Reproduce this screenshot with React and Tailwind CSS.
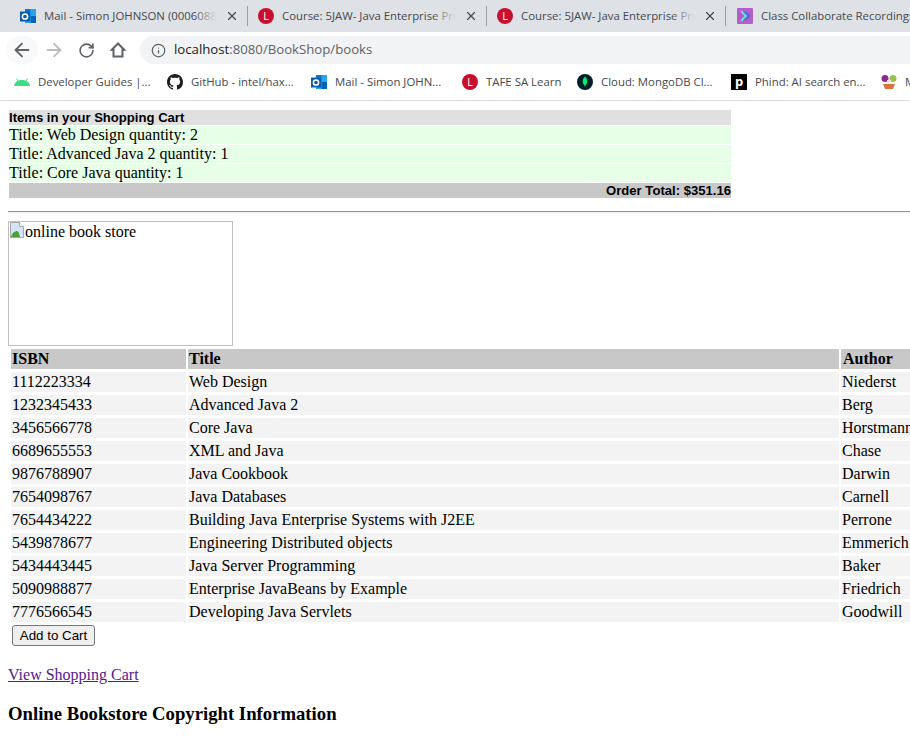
import React from 'react'
import { X, ArrowLeft, ArrowRight, RotateCw, Info } from 'lucide-react'

const books = [
  ['1112223334', 'Web Design', 'Niederst'],
  ['1232345433', 'Advanced Java 2', 'Berg'],
  ['3456566778', 'Core Java', 'Horstmann'],
  ['6689655553', 'XML and Java', 'Chase'],
  ['9876788907', 'Java Cookbook', 'Darwin'],
  ['7654098767', 'Java Databases', 'Carnell'],
  ['7654434222', 'Building Java Enterprise Systems with J2EE', 'Perrone'],
  ['5439878677', 'Engineering Distributed objects', 'Emmerich'],
  ['5434443445', 'Java Server Programming', 'Baker'],
  ['5090988877', 'Enterprise JavaBeans by Example', 'Friedrich'],
  ['7776566545', 'Developing Java Servlets', 'Goodwill'],
]

function Outlook() {
  return (
    <svg width="16" height="16" viewBox="0 0 16 16" className="shrink-0">
      <rect x="5" y="1" width="11" height="14" fill="#28a8ea" />
      <rect x="5" y="1" width="5.5" height="7" fill="#0078d4" />
      <rect x="10.5" y="8" width="5.5" height="7" fill="#0364b8" />
      <rect x="0" y="3.5" width="10" height="10" fill="#0f5cab" />
      <circle cx="5" cy="8.5" r="2.6" fill="none" stroke="#fff" strokeWidth="1.5" />
    </svg>
  )
}

function LearnIcon() {
  return (
    <span className="w-4 h-4 shrink-0 rounded-full bg-[#c8102e] text-white text-[11px] leading-4 text-center font-['Open_Sans',sans-serif]">L</span>
  )
}

function CollabIcon() {
  return (
    <svg width="16" height="16" viewBox="0 0 16 16" className="shrink-0">
      <rect width="16" height="16" rx="1" fill="#b45cc8" />
      <path d="M4 3l5 5-5 5" fill="none" stroke="#5ee0e0" strokeWidth="2" />
      <path d="M8 4l4 4-4 4" fill="none" stroke="#3f6fd8" strokeWidth="2" />
    </svg>
  )
}

function Android() {
  return (
    <svg width="16" height="16" viewBox="0 0 16 16" className="shrink-0">
      <path d="M0 12C.4 8.600 3.600 6 8 6s7.600 2.600 8 6z" fill="#3ddc84" />
      <path d="M4 7L2.500 4.500M12 7l1.500-2.500" stroke="#3ddc84" strokeWidth="1" />
    </svg>
  )
}

function GitHub() {
  return (
    <svg width="16" height="16" viewBox="0 0 16 16" className="shrink-0" fill="#1b1f23">
      <path d="M8 0C3.580 0 0 3.580 0 8c0 3.540 2.290 6.530 5.470 7.590.4.070.55-.17.55-.38 0-.19-.01-.82-.01-1.490-2.010.37-2.530-.49-2.690-.94-.09-.23-.48-.94-.82-1.130-.28-.15-.68-.52-.01-.53.63-.01 1.080.58 1.230.82.72 1.210 1.870.87 2.330.66.070-.52.28-.87.51-1.070-1.780-.2-3.640-.89-3.640-3.950 0-.87.31-1.590.82-2.150-.08-.2-.36-1.020.08-2.120 0 0 .67-.21 2.200.82.64-.18 1.320-.27 2-.27s1.360.09 2 .27c1.530-1.040 2.200-.82 2.200-.82.44 1.100.16 1.920.08 2.120.51.56.82 1.270.82 2.150 0 3.070-1.870 3.750-3.650 3.950.29.25.54.73.54 1.480 0 1.070-.01 1.930-.01 2.200 0 .21.15.46.55.38A8.010 8.010 0 0016 8c0-4.420-3.580-8-8-8z" />
    </svg>
  )
}

function Mongo() {
  return (
    <svg width="16" height="16" viewBox="0 0 16 16" className="shrink-0">
      <circle cx="8" cy="8" r="8" fill="#001e2b" />
      <path d="M8 2.500c1.800 2 2.600 3.700 2.300 5.600C10 10 9 11 8.300 11.800L8 13.500l-.3-1.700C7 11 6 10 5.700 8.100 5.400 6.200 6.200 4.500 8 2.500z" fill="#00ed64" />
    </svg>
  )
}

function Phind() {
  return (
    <span className="w-4 h-4 shrink-0 bg-black text-white text-[13px] leading-[15px] text-center font-bold font-['Open_Sans',sans-serif]">p</span>
  )
}

function Trees() {
  return (
    <svg width="16" height="16" viewBox="0 0 16 16" className="shrink-0">
      <circle cx="4" cy="4.500" r="3.500" fill="#8e2a8e" />
      <circle cx="12" cy="4.500" r="3.500" fill="#9cc04c" />
      <rect x="6" y="6" width="4" height="4" fill="#f3e9dc" />
      <path d="M2 10h12l-2 5H4z" fill="#d2773a" />
    </svg>
  )
}

function HomeIcon() {
  return (
    <svg width="18" height="18" viewBox="0 0 18 18" fill="none" stroke="#5f6368" strokeWidth="2">
      <path d="M9 2.500L2.800 8.800H4.500V15.500H13.500V8.800H15.200Z" strokeLinejoin="miter" />
    </svg>
  )
}

function BrokenImage() {
  return (
    <svg width="16" height="16" viewBox="0 0 16 16" className="shrink-0">
      <path d="M1.500.5h9l4 4v11h-13z" fill="#d6e4f7" stroke="#a8a8a8" />
      <path d="M10.500.5v4h4" fill="#fff" stroke="#a8a8a8" />
      <path d="M2 15c1-4 4-6 6-6 1.500 0 2 2 3 6z" fill="#4f9e3c" />
    </svg>
  )
}

function Tab({ icon, title, w }) {
  return (
    <div className={`${w} h-[20px] flex items-center border-r border-[#9aa0a6] shrink-0 pl-[10px] pr-[8px] gap-[8px]`}>
      {icon}
      <div className="relative -mt-px flex-1 min-w-0 overflow-hidden whitespace-nowrap text-[11.4px] text-[#45494e]">
        {title}
        <div className="absolute right-0 top-0 bottom-0 w-6 bg-gradient-to-l from-[#dee1e6] to-transparent" />
      </div>
      <X size={14} strokeWidth={2} className="text-[#45494e] shrink-0" />
    </div>
  )
}

function Bookmark({ icon, title, w }) {
  return (
    <div className={`${w} flex items-center gap-[8px] shrink-0`}>
      {icon}
      <span className="whitespace-nowrap text-[11.4px] text-[#45494e]">{title}</span>
    </div>
  )
}

function Slot({ children, bg }) {
  return <div className={`w-8 h-7 flex items-center justify-center rounded-full shrink-0 ${bg || ''}`}>{children}</div>
}

export default function App() {
  return (
    <div className="w-[910px] h-[748px] overflow-hidden bg-white font-['Liberation_Serif',serif] text-black text-base">
      <div className="h-8 bg-[#dee1e6] flex items-center pl-[10px] overflow-hidden font-['Open_Sans',sans-serif]">
        <Tab w="w-[238px]" icon={<Outlook />} title="Mail - Simon JOHNSON (00060886" />
        <Tab w="w-[239px]" icon={<LearnIcon />} title="Course: 5JAW- Java Enterprise Progr" />
        <Tab w="w-[239px]" icon={<LearnIcon />} title="Course: 5JAW- Java Enterprise Progr" />
        <div className="flex items-center gap-[8px] pl-[11px] shrink-0">
          <CollabIcon />
          <span className="-mt-px whitespace-nowrap text-[11.4px] text-[#45494e]">Class Collaborate Recordings</span>
        </div>
      </div>

      <div className="h-8 pt-1 flex items-center pl-[6px] font-['Open_Sans',sans-serif]">
        <Slot bg="bg-[#f8f9fa]"><ArrowLeft size={22} strokeWidth={2} className="text-[#5f6368]" /></Slot>
        <Slot><ArrowRight size={22} strokeWidth={2} className="text-[#babcbe]" /></Slot>
        <Slot><RotateCw size={17} strokeWidth={2.4} className="text-[#5f6368]" /></Slot>
        <Slot><HomeIcon /></Slot>
        <div className="ml-[6px] flex-1 h-7 bg-[#f1f3f4] rounded-l-full flex items-center pl-[11px] gap-[8px]">
          <Info size={15} strokeWidth={2} className="text-[#5f6368]" />
          <span className="text-[13.2px] text-[#5f6368]"><span className="text-[#202124]">localhost</span>:8080/BookShop/books</span>
        </div>
      </div>

      <div className="h-[37px] flex items-center pl-[14px] border-b border-[#dadce0] overflow-hidden font-['Open_Sans',sans-serif]">
        <Bookmark w="w-[153px]" icon={<Android />} title="Developer Guides  |..." />
        <Bookmark w="w-[144px]" icon={<GitHub />} title="GitHub - intel/hax..." />
        <Bookmark w="w-[151px]" icon={<Outlook />} title="Mail - Simon JOHN..." />
        <Bookmark w="w-[115px]" icon={<LearnIcon />} title="TAFE SA Learn" />
        <Bookmark w="w-[154px]" icon={<Mongo />} title="Cloud: MongoDB Cl..." />
        <Bookmark w="w-[150px]" icon={<Phind />} title="Phind: AI search en..." />
        <Bookmark w="w-[30px]" icon={<Trees />} title="M" />
      </div>

      <div className="pl-[9px] pt-[9px]">
        <div className="w-[722px] flex flex-col gap-px">
          <div className="h-[15px] bg-[#e0e0e0] font-['Liberation_Sans',sans-serif] font-bold text-[13.1px] leading-[15px]">Items in your Shopping Cart</div>
          <div className="h-[18px] bg-[#e6ffe6] leading-[18px]">Title: Web Design quantity: 2</div>
          <div className="h-[18px] bg-[#e6ffe6] leading-[18px]">Title: Advanced Java 2 quantity: 1</div>
          <div className="h-[18px] bg-[#e6ffe6] leading-[18px]">Title: Core Java quantity: 1</div>
          <div className="h-[15px] bg-[#c8c8c8] font-['Liberation_Sans',sans-serif] font-bold text-[13.1px] leading-[15px] text-right">Order Total: $351.16</div>
        </div>
      </div>

      <hr className="ml-2 mt-[13px] border-t border-[#9a9a9a] border-b-[1px] border-b-[#eeeeee]" />

      <div className="ml-2 mt-[8px] w-[225px] h-[125px] border border-[#c0c0c0] flex items-start">
        <BrokenImage />
        <span className="leading-[20px]">online book store</span>
      </div>

      <div className="ml-[11px] mt-[3px] w-[1000px] flex flex-col gap-[3px]">
        <div className="h-5 flex gap-[2px] font-bold leading-5">
          <div className="w-[175px] bg-[#c8c8c8] pl-px">ISBN</div>
          <div className="w-[651px] bg-[#c8c8c8] pl-px">Title</div>
          <div className="flex-1 bg-[#c8c8c8] pl-[2px]">Author</div>
        </div>
        {books.map(([isbn, title, author]) => (
          <div key={isbn} className="h-5 flex gap-[2px] leading-5">
            <div className="w-[175px] bg-[#f3f3f3] pl-px">{isbn}</div>
            <div className="w-[651px] bg-[#f3f3f3] pl-px">{title}</div>
            <div className="flex-1 bg-[#f3f3f3] pl-px">{author}</div>
          </div>
        ))}
      </div>

      <button className="block ml-3 mt-[3px] w-[83px] h-[21px] bg-[#efefef] border border-[#767676] rounded-[3px] font-['Liberation_Sans',sans-serif] text-[13.33px] leading-none text-black">Add to Cart</button>

      <a href="#" className="block ml-2 mt-[20px] leading-[18px] underline text-[#551a8b] w-fit">View Shopping Cart</a>

      <div className="ml-2 mt-[19px] text-[18.72px] font-bold leading-[21px]">Online Bookstore Copyright Information</div>
    </div>
  )
}
